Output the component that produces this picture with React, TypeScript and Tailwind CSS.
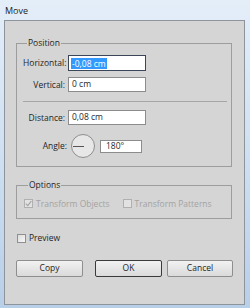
import React from "react";

const font = { fontFamily: '"Open Sans", "Noto Sans", sans-serif' };

function Field({ label, value, focused }: { label: string; value: string; focused?: boolean }) {
    return (
        <div className="flex items-center">
            <span className="w-[42px] text-right text-[#1f1f1f] whitespace-nowrap">{label}</span>
            <div
                className={
                    focused
                        ? "ml-[3px] w-[78px] h-[16px] bg-white border border-[#3b4759] flex items-center pl-[2px]"
                        : "ml-[3px] w-[78px] h-[15px] bg-white border border-[#8c8c8c] flex items-center pl-[3px]"
                }
            >
                {focused ? (
                    <span className="bg-[#3399ff] text-white leading-[11px] px-[1px]">{value}</span>
                ) : (
                    <span className="text-[#1f1f1f] leading-none">{value}</span>
                )}
            </div>
        </div>
    );
}

function Check({ checked, disabled, label }: { checked?: boolean; disabled?: boolean; label: string }) {
    return (
        <div className="flex items-center">
            <div
                className={
                    disabled
                        ? "w-[9px] h-[9px] border border-[#b0b0b0] bg-[#e2e2e2] flex items-center justify-center"
                        : "w-[9px] h-[9px] border border-[#8f8f8f] bg-gradient-to-br from-[#dcdcdc] to-[#f7f7f7]"
                }
            >
                {checked && (
                    <svg width="7" height="7" viewBox="0 0 7 7">
                        <path d="M0.8 3.6 L2.8 5.6 L6.3 1.2" stroke="#a4a4a4" strokeWidth="1.2" fill="none" />
                    </svg>
                )}
            </div>
            <span className={disabled ? "ml-[3px] text-[#a3a3a3]" : "ml-[3px] text-[#1f1f1f]"}>{label}</span>
        </div>
    );
}

function Button({ children, primary, w }: { children: React.ReactNode; primary?: boolean; w: string }) {
    return (
        <div
            className={
                (primary ? "border-[#3a3a3a] " : "border-[#8e8e8e] ") +
                w +
                " h-[17px] border rounded-[2px] bg-gradient-to-b from-[#f2f2f2] to-[#dadada] flex items-center justify-center text-[#1f1f1f]"
            }
        >
            {children}
        </div>
    );
}

export default function App() {
    return (
        <div
            style={font}
            className="w-[250px] h-[308px] flex flex-col bg-gradient-to-b from-[#e4eef9] via-[#cfe0f2] to-[#b8cfe8] pl-[4px] pr-[5px] pb-[3px] text-[8.5px]"
        >
            <div className="h-[20px] pt-[5px] pl-[1px] text-[9px] text-[#222] leading-[11px]">Move</div>

            <div className="flex-1 bg-[#d5d5d5] border border-[#8e949b] pl-[11px] pr-[11px] pt-[16px]">
                <fieldset className="w-[216px] border border-[#9d9d9d] pl-[6px] pr-[4px] pb-[8px] leading-[12px]">
                    <legend className="ml-[4px] px-[1px] text-[#1f1f1f]">Position</legend>
                    <div className="mt-[6px]">
                        <Field label="Horizontal:" value="-0,08 cm" focused />
                    </div>
                    <div className="mt-[6px]">
                        <Field label="Vertical:" value="0 cm" />
                    </div>
                    <div className="mt-[9px] h-px bg-[#a6a6a6]" />
                    <div className="mt-[8px]">
                        <Field label="Distance:" value="0,08 cm" />
                    </div>
                    <div className="mt-[9px] flex items-center">
                        <span className="w-[44px] text-right text-[#1f1f1f]">Angle:</span>
                        <div className="ml-[4px] w-[24px] h-[24px] rounded-full border border-[#8d8d8d] bg-[#e7e7e7] flex items-center">
                            <div className="ml-[1px] w-[11px] h-px bg-[#555]" />
                        </div>
                        <div className="ml-[5px] w-[42px] h-[13px] bg-white border border-[#8c8c8c] flex items-center pl-[5px] text-[#1f1f1f] leading-none">
                            180°
                        </div>
                    </div>
                </fieldset>

                <fieldset className="mt-[12px] w-[216px] border border-[#9d9d9d] pl-[7px] pr-[4px] pb-[10px] leading-[12px]">
                    <legend className="ml-[4px] px-[1px] text-[#1f1f1f]">Options</legend>
                    <div className="mt-[8px] flex items-center gap-[13px] h-[9px]">
                        <Check checked disabled label="Transform Objects" />
                        <Check disabled label="Transform Patterns" />
                    </div>
                </fieldset>

                <div className="mt-[15px] ml-[1px] h-[9px] flex items-center">
                    <Check label="Preview" />
                </div>

                <div className="mt-[17px] flex">
                    <Button w="w-[67px]">Copy</Button>
                    <div className="ml-[12px]">
                        <Button w="w-[67px]" primary>
                            OK
                        </Button>
                    </div>
                    <div className="ml-[5px]">
                        <Button w="w-[66px]">Cancel</Button>
                    </div>
                </div>
            </div>
        </div>
    );
}
